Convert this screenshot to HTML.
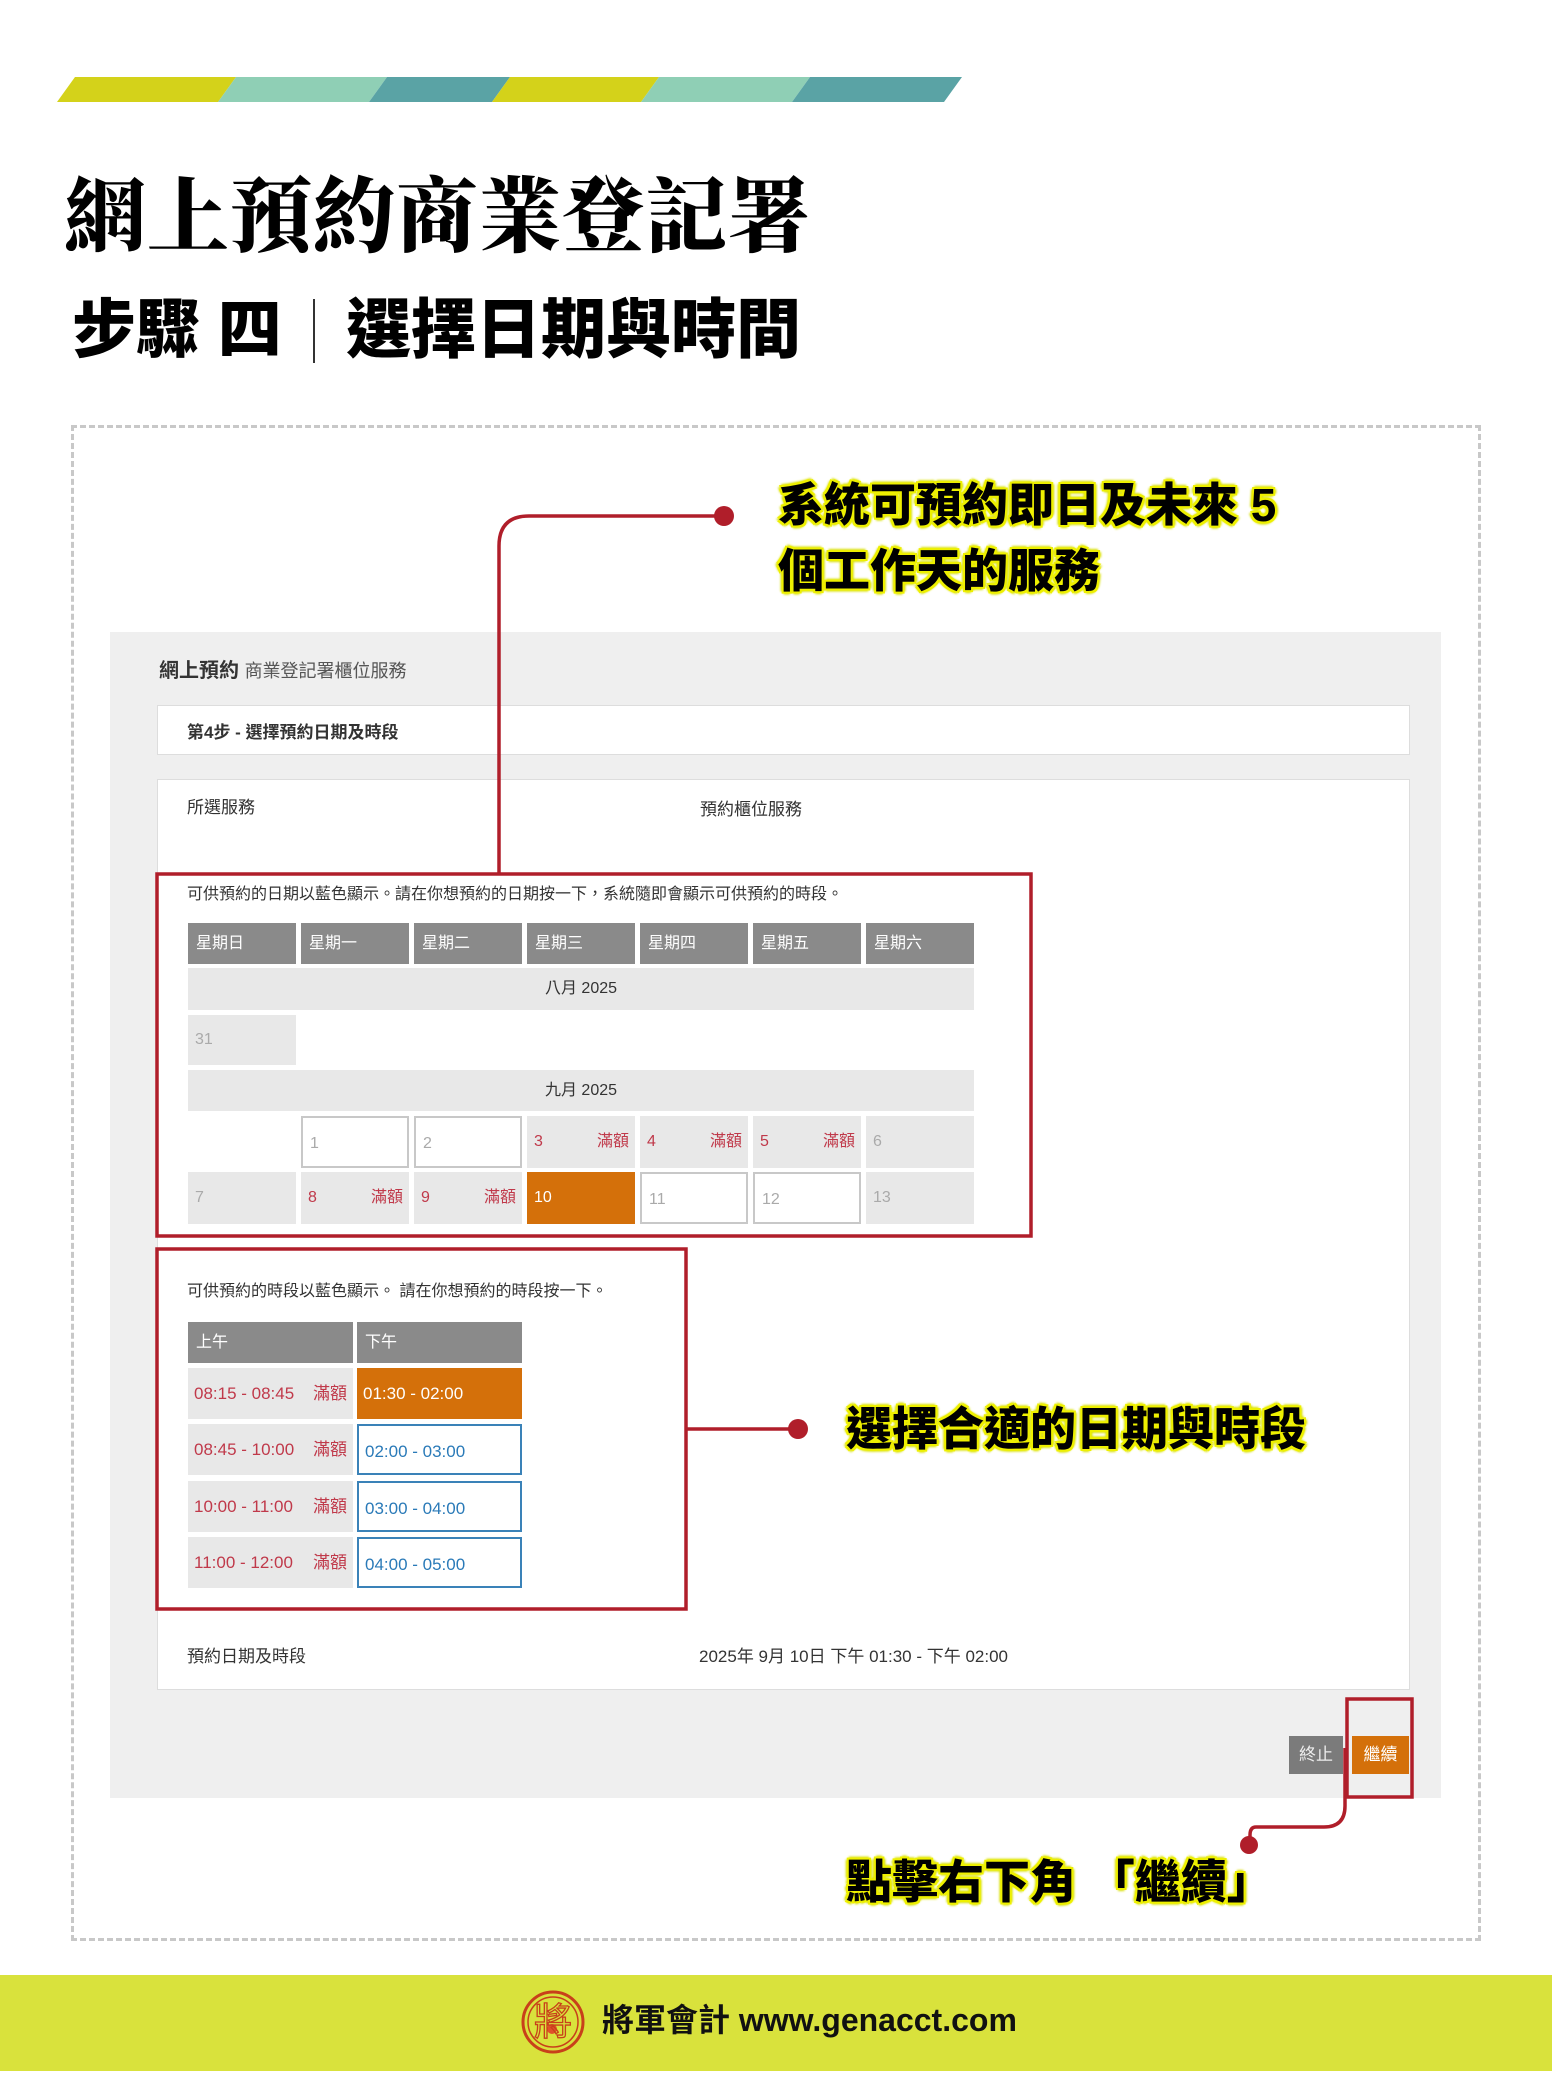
<!DOCTYPE html>
<html><head><meta charset="utf-8">
<style>
*{margin:0;padding:0;box-sizing:border-box}
body{width:1552px;height:2075px;background:#fff;position:relative;overflow:hidden;font-family:"Liberation Sans","Noto Sans CJK TC",sans-serif}
.a{position:absolute}
.t{font-size:17px;color:#333;white-space:nowrap}
.h{background:#8a8a8a;color:#fff;font-size:16px;padding-left:8px;line-height:41px;height:41px}
.g{background:#e8e8e8}
.c{position:absolute;width:108px;height:52px;font-size:16px;line-height:52px;padding-left:7px}
.w{background:#fff;border:2px solid #c8c8c8;color:#aaa}
.gr{background:#e8e8e8;color:#aaa}
.f{background:#e8e8e8;color:#c0394a}
.f span{position:absolute;right:6px}
.o{background:#d4700a;color:#fff}
.s{position:absolute;width:165px;height:51px;line-height:51px;font-size:17px;padding-left:6px}
.b{background:#fff;border:2px solid #3a82b8;color:#2a7ab8}
.ann{position:absolute;font-family:"Liberation Sans","Noto Sans CJK TC",sans-serif;font-weight:900;color:#000;white-space:nowrap;text-shadow:-2px -2px 0 #eef000,2px -2px 0 #eef000,-2px 2px 0 #eef000,2px 2px 0 #eef000,0 3px 2px #d8e000,3px 0 2px #d8e000,-3px 0 2px #d8e000,0 -3px 2px #d8e000}
</style></head><body>

<svg class="a" style="left:0;top:0" width="1552" height="120">
<polygon points="75,77 236,77 218,102 57,102" fill="#d4d21a"/>
<polygon points="236,77 387,77 369,102 218,102" fill="#8fcfb5"/>
<polygon points="387,77 510,77 492,102 369,102" fill="#5aa3a5"/>
<polygon points="510,77 659,77 641,102 492,102" fill="#d4d21a"/>
<polygon points="659,77 810,77 792,102 641,102" fill="#8fcfb5"/>
<polygon points="810,77 962,77 944,102 792,102" fill="#5aa3a5"/>
</svg>

<div class="a" style="left:64px;top:173px;font-family:'Liberation Serif','Noto Serif CJK SC',serif;font-weight:900;font-size:82px;line-height:90px;letter-spacing:1px;white-space:nowrap">網上預約商業登記署</div>
<div class="a" style="left:72px;top:293px;font-family:'Liberation Sans','Noto Sans CJK TC',sans-serif;font-weight:900;font-size:64px;line-height:74px;white-space:nowrap">步驟 四</div>
<div class="a" style="left:313px;top:299px;width:2px;height:64px;background:#333"></div>
<div class="a" style="left:346px;top:293px;font-family:'Liberation Sans','Noto Sans CJK TC',sans-serif;font-weight:900;font-size:65px;line-height:74px;white-space:nowrap">選擇日期與時間</div>

<div class="a" style="left:71px;top:425px;width:1410px;height:1516px;border:3px dashed #c8c8c8"></div>

<div class="a" style="left:110px;top:632px;width:1331px;height:1166px;background:#efefef"></div>
<div class="a t" style="left:159px;top:654px;font-size:20px;color:#333"><b>網上預約</b> <span style="font-size:18px;color:#555">商業登記署櫃位服務</span></div>
<div class="a" style="left:157px;top:705px;width:1253px;height:50px;background:#fff;border:1px solid #ddd"></div>
<div class="a t" style="left:187px;top:718px;font-weight:bold">第4步 - 選擇預約日期及時段</div>
<div class="a" style="left:157px;top:779px;width:1253px;height:911px;background:#fff;border:1px solid #ddd"></div>
<div class="a t" style="left:187px;top:793px">所選服務</div>
<div class="a t" style="left:700px;top:795px">預約櫃位服務</div>

<div class="a t" style="left:187px;top:880px;font-size:16px">可供預約的日期以藍色顯示。請在你想預約的日期按一下，系統隨即會顯示可供預約的時段。</div>
<div class="a h" style="left:188px;top:923px;width:108px">星期日</div>
<div class="a h" style="left:301px;top:923px;width:108px">星期一</div>
<div class="a h" style="left:414px;top:923px;width:108px">星期二</div>
<div class="a h" style="left:527px;top:923px;width:108px">星期三</div>
<div class="a h" style="left:640px;top:923px;width:108px">星期四</div>
<div class="a h" style="left:753px;top:923px;width:108px">星期五</div>
<div class="a h" style="left:866px;top:923px;width:108px">星期六</div>
<div class="a g" style="left:188px;top:968px;width:786px;height:42px;text-align:center;line-height:42px;font-size:16px;color:#333">八月 2025</div>
<div class="c gr" style="left:188px;top:1015px;height:50px;line-height:50px">31</div>
<div class="a g" style="left:188px;top:1070px;width:786px;height:41px;text-align:center;line-height:41px;font-size:16px;color:#333">九月 2025</div>
<div class="c w" style="left:301px;top:1116px">1</div>
<div class="c w" style="left:414px;top:1116px">2</div>
<div class="c f" style="left:527px;top:1116px">3<span>滿額</span></div>
<div class="c f" style="left:640px;top:1116px">4<span>滿額</span></div>
<div class="c f" style="left:753px;top:1116px">5<span>滿額</span></div>
<div class="c gr" style="left:866px;top:1116px">6</div>
<div class="c gr" style="left:188px;top:1172px">7</div>
<div class="c f" style="left:301px;top:1172px">8<span>滿額</span></div>
<div class="c f" style="left:414px;top:1172px">9<span>滿額</span></div>
<div class="c o" style="left:527px;top:1172px">10</div>
<div class="c w" style="left:640px;top:1172px">11</div>
<div class="c w" style="left:753px;top:1172px">12</div>
<div class="c gr" style="left:866px;top:1172px">13</div>

<div class="a t" style="left:187px;top:1277px;font-size:16px">可供預約的時段以藍色顯示。 請在你想預約的時段按一下。</div>
<div class="a h" style="left:188px;top:1322px;width:165px">上午</div>
<div class="a h" style="left:357px;top:1322px;width:165px">下午</div>
<div class="s f" style="left:188px;top:1368px">08:15 - 08:45<span>滿額</span></div>
<div class="s o" style="left:357px;top:1368px">01:30 - 02:00</div>
<div class="s f" style="left:188px;top:1424px">08:45 - 10:00<span>滿額</span></div>
<div class="s b" style="left:357px;top:1424px">02:00 - 03:00</div>
<div class="s f" style="left:188px;top:1481px">10:00 - 11:00<span>滿額</span></div>
<div class="s b" style="left:357px;top:1481px">03:00 - 04:00</div>
<div class="s f" style="left:188px;top:1537px">11:00 - 12:00<span>滿額</span></div>
<div class="s b" style="left:357px;top:1537px">04:00 - 05:00</div>

<div class="a t" style="left:187px;top:1642px">預約日期及時段</div>
<div class="a t" style="left:699px;top:1642px">2025年 9月 10日 下午 01:30 - 下午 02:00</div>

<div class="a" style="left:1289px;top:1736px;width:54px;height:38px;background:#7b7b7b;color:#eee;font-size:17px;line-height:38px;text-align:center">終止</div>
<div class="a" style="left:1352px;top:1736px;width:57px;height:38px;background:#d4700a;color:#fff;font-size:17px;line-height:38px;text-align:center">繼續</div>

<svg class="a" style="left:0;top:0" width="1552" height="2075">
<g fill="none" stroke="#b01e2a" stroke-width="3.5">
<rect x="157" y="874" width="874" height="362"/>
<rect x="157" y="1249" width="529" height="360"/>
<rect x="1347" y="1699" width="65" height="98"/>
<path d="M499 873 V546 Q499 516 529 516 H722"/>
<path d="M687 1429 H798"/>
<path d="M1345 1748 V1806 Q1345 1827 1324 1827 H1256 Q1250 1827 1250 1835 V1845"/>
</g>
<g fill="#b01e2a">
<circle cx="724" cy="516" r="10"/>
<circle cx="798" cy="1429" r="10"/>
<circle cx="1249" cy="1845" r="9"/>
</g>
</svg>

<div class="ann" style="left:778px;top:476px;font-size:46px;line-height:58px">系統可預約即日及未來 5</div>
<div class="ann" style="left:778px;top:542px;font-size:46px;line-height:58px">個工作天的服務</div>
<div class="ann" style="left:846px;top:1400px;font-size:46px;line-height:58px">選擇合適的日期與時段</div>
<div class="ann" style="left:846px;top:1853px;font-size:46px;line-height:58px">點擊右下角 「繼續」</div>

<div class="a" style="left:0;top:1975px;width:1552px;height:96px;background:#d9e23c"></div>
<svg class="a" style="left:518px;top:1987px" width="70" height="70">
<circle cx="35" cy="35" r="30" fill="none" stroke="#c8401a" stroke-width="3"/>
<circle cx="35" cy="35" r="25" fill="none" stroke="#c8401a" stroke-width="1.5"/>
<circle cx="34" cy="42" r="5" fill="#e0502a"/>
<text x="35" y="48" font-size="38" text-anchor="middle" fill="none" stroke="#c8401a" stroke-width="1.3" font-family="Noto Sans CJK TC,sans-serif">將</text>
</svg>
<div class="a" style="left:602px;top:1997px;font-size:32px;font-weight:bold;line-height:46px;white-space:nowrap;color:#111">將軍會計 www.genacct.com</div>
</body></html>
